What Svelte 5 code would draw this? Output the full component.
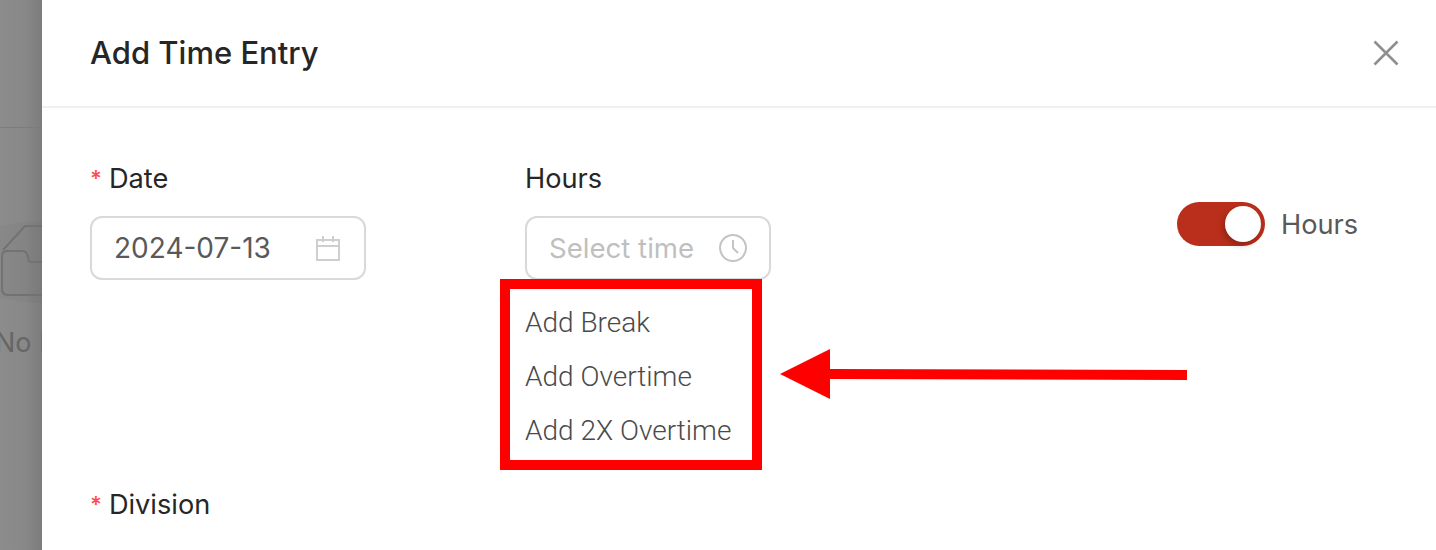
<script>
  const extras = ["Add Break", "Add Overtime", "Add 2X Overtime"];
</script>

<div class="page">
  <div class="backdrop">
    <div class="back-line"></div>
    <div class="shade"></div>
    <svg class="inbox" width="42" height="90" viewBox="0 0 42 90" fill="none" stroke="#727272" stroke-width="2">
      <path d="M3 26 L25 2 H44" />
      <path d="M44 38 H32 Q28 38 28 33 Q27 27 22 27 H7 Q2 27 2 32 V64 Q2 71 8 71 H44" />
    </svg>
    <span class="no-data">No Data</span>
  </div>

  <div class="drawer">
    <header>
      <h1>Add Time Entry</h1>
      <svg class="close" width="26" height="26" viewBox="0 0 26 26" stroke="#8f8f8f" stroke-width="2.6">
        <path d="M1.5 1.5 L24.5 24.5 M24.5 1.5 L1.5 24.5" />
      </svg>
    </header>

    <div class="body">
      <div class="row">
        <div class="field date">
          <span class="label"><i>*</i>Date</span>
          <div class="input">
            <span>2024-07-13</span>
            <svg width="26" height="26" viewBox="0 0 26 26" fill="none" stroke="#cfcfcf" stroke-width="2">
              <path d="M2 5 H24 V25 H2 Z M2 11 H24 M8 1 V7 M18 1 V7" />
            </svg>
          </div>
        </div>

        <div class="field hours">
          <span class="label">Hours</span>
          <div class="input empty">
            <span>Select time</span>
            <svg width="30" height="30" viewBox="0 0 30 30" fill="none" stroke="#c4c4c4" stroke-width="2">
              <circle cx="15" cy="15" r="13" />
              <path d="M15 7 V15 L20 20" />
            </svg>
          </div>
          <div class="extras">
            {#each extras as extra}
              <a href="#top">{extra}</a>
            {/each}
          </div>
        </div>

        <div class="switch-wrap">
          <div class="switch"><div class="knob"></div></div>
          <span>Hours</span>
        </div>
      </div>

      <span class="label division"><i>*</i>Division</span>
    </div>
  </div>

  <div class="callout"></div>
  <svg class="arrow" width="410" height="52" viewBox="0 0 410 52" fill="#ff0000">
    <path d="M0 25 L50 0 V20 L407 21 V31 L50 30 V50 Z" />
  </svg>
</div>

<style>
  :global(body) {
    margin: 0;
  }
  .page {
    position: relative;
    display: flex;
    width: 1436px;
    height: 550px;
    overflow: hidden;
    font-family: Inter, "Liberation Sans", sans-serif;
    background: #fff;
  }
  .backdrop {
    position: relative;
    width: 42px;
    flex-shrink: 0;
    background: linear-gradient(to right, #8c8c8c 0%, #888 60%, #7c7c7c 100%);
    overflow: hidden;
  }
  .back-line {
    height: 1px;
    margin-top: 127px;
    background: #7c7c7c;
  }
  .shade {
    position: absolute;
    left: -60px;
    top: 220px;
    width: 240px;
    height: 84px;
    border-radius: 50%;
    background: rgba(0, 0, 0, 0.025);
  }
  .inbox {
    position: absolute;
    left: 0;
    top: 224px;
  }
  .no-data {
    position: absolute;
    left: -5px;
    top: 326px;
    font-size: 27px;
    line-height: 34px;
    white-space: nowrap;
    color: #666;
  }
  .drawer {
    flex: 1;
    background: #fff;
  }
  header {
    display: flex;
    align-items: center;
    justify-content: space-between;
    height: 106px;
    padding: 0 37px 0 48px;
    border-bottom: 2px solid #f0f0f0;
  }
  h1 {
    margin: 0;
    font-size: 31px;
    line-height: 38px;
    font-weight: 500;
    color: #262626;
  }
  .body {
    padding: 52px 0 0 48px;
  }
  .row {
    display: flex;
    height: 326px;
  }
  .field {
    display: flex;
    flex-direction: column;
  }
  .date {
    width: 435px;
  }
  .hours {
    width: 652px;
  }
  .label {
    display: block;
    font-size: 27.2px;
    line-height: 38px;
    color: #262626;
  }
  .label i {
    font-style: normal;
    font-weight: 600;
    line-height: 0;
    color: #ff4d4f;
    margin-right: 7px;
    font-size: 22px;
    vertical-align: 2px;
  }
  .input {
    display: flex;
    align-items: center;
    justify-content: space-between;
    box-sizing: border-box;
    width: 276px;
    height: 64px;
    margin-top: 18px;
    padding: 0 23px 0 22px;
    border: 2px solid #d9d9d9;
    border-radius: 12px;
    font-size: 28px;
    color: #595959;
  }
  .input.empty {
    width: 246px;
    padding-right: 21px;
    font-size: 27.6px;
    color: #bfbfbf;
  }
  .extras {
    display: flex;
    flex-direction: column;
    margin-top: 16px;
  }
  .extras a {
    font-family: Roboto, sans-serif;
    font-weight: 300;
    font-size: 28px;
    line-height: 54px;
    color: #4a4a4a;
    text-decoration: none;
    white-space: nowrap;
  }
  .switch-wrap {
    display: flex;
    align-items: center;
    gap: 16px;
    height: 44px;
    margin-top: 42px;
    font-size: 27.2px;
    color: #595959;
  }
  .switch {
    display: flex;
    justify-content: flex-end;
    align-items: center;
    box-sizing: border-box;
    width: 88px;
    height: 44px;
    padding: 4px;
    border-radius: 22px;
    background: #ba2f1b;
  }
  .knob {
    width: 36px;
    height: 36px;
    border-radius: 50%;
    background: #fff;
    box-shadow: -2px 3px 6px rgba(0, 0, 0, 0.25);
  }
  .callout {
    position: absolute;
    left: 500px;
    top: 279px;
    width: 262px;
    height: 191px;
    box-sizing: border-box;
    border: 10px solid #ff0000;
  }
  .arrow {
    position: absolute;
    left: 780px;
    top: 349px;
  }
</style>
